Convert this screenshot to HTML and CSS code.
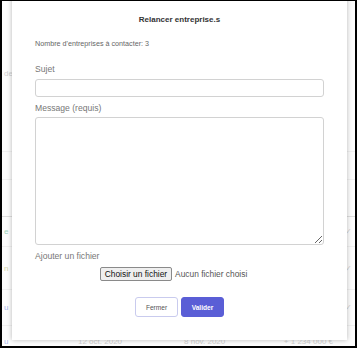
FILE: index.html
```html
<!DOCTYPE html>
<html lang="fr">
<head>
<meta charset="utf-8">
<title>Relancer entreprise.s</title>
<link rel="stylesheet" href="styles.css">
</head>
<body>

<div class="screen">
  <!-- page behind the modal, mostly hidden -->
  <div class="page">
    <div class="row row-head"><span class="cell faint">de</span></div>
    <div class="row row-a"></div>
    <div class="row row-b"></div>
    <div class="row row-c"><span class="cell green">e</span><span class="check">✓</span></div>
    <div class="row row-d"><span class="cell olive">n</span><span class="check">✓</span></div>
    <div class="row row-e"><span class="cell blue">u</span><span class="check">✓</span></div>
    <div class="row row-f">
      <span class="cell blue">u</span>
      <span class="date">12 oct. 2020</span>
      <span class="date">8 nov. 2020</span>
      <span class="amount">+ 1 234 000 €</span>
    </div>
  </div>

  <div class="modal">
    <h1 class="modal-title">Relancer entreprise.s</h1>
    <p class="count">Nombre d'entreprises à contacter: 3</p>

    <label class="field-label" for="sujet">Sujet</label>
    <input type="text" id="sujet" class="field-input">

    <label class="field-label" for="message">Message (requis)</label>
    <textarea id="message" class="field-area"></textarea>

    <div class="field-label">Ajouter un fichier</div>
    <div class="file-row">
      <button type="button" class="file-btn">Choisir un fichier</button>
      <span class="file-name">Aucun fichier choisi</span>
    </div>

    <div class="actions">
      <button type="button" class="btn btn-close">Fermer</button>
      <button type="button" class="btn btn-ok">Valider</button>
    </div>
  </div>
</div>

</body>
</html>
```

FILE: styles.css
```css
body {
  margin: 0;
  font-family: "Liberation Sans", Arial, sans-serif;
  background-color: #000;
}

.screen {
  width: 357px;
  height: 348px;
  box-sizing: border-box;
  border: 2px solid #000;
  border-top-width: 1px;
  position: relative;
  overflow: hidden;
  background-color: #fdfdfd;
}

/* Background page (faded) */
.page {
  display: flex;
  flex-direction: column;
  opacity: 0.45;
}

.row {
  display: flex;
  align-items: center;
  border-bottom: 1px solid #e4e4e4;
  font-size: 8px;
  position: relative;
}

.row-head { height: 151px; align-items: flex-start; padding-top: 68px; box-sizing: border-box; }
.row-a { height: 27px; }
.row-b { height: 36px; border-bottom-color: #bbb; }
.row-c { height: 29px; }
.row-d { height: 42px; }
.row-e { height: 35px; }
.row-f { height: 30px; }

.cell {
  width: 12px;
  padding-left: 2px;
}

.faint { color: #999; }
.green { color: #2a9d6a; }
.olive { color: #a6a83a; }
.blue { color: #3c5ed6; }

.check {
  margin-left: auto;
  margin-right: 3px;
  color: #999;
  font-size: 8px;
}

.date {
  margin-left: 62px;
  color: #999;
}

.amount {
  margin-left: auto;
  margin-right: 22px;
  color: #999;
}

/* Modal */
.modal {
  position: absolute;
  left: 10px;
  top: -20px;
  width: 335px;
  box-sizing: border-box;
  padding: 33px 23px 23px 23px;
  background-color: #fff;
  box-shadow: 0 0 5px rgba(0, 0, 0, 0.28);
  display: flex;
  flex-direction: column;
}

.modal-title {
  margin: 0;
  font-size: 8px;
  line-height: 12px;
  font-weight: bold;
  color: #333;
  text-align: center;
}

.count {
  margin: 13px 0 0 0;
  font-size: 7.2px;
  line-height: 10px;
  color: #666;
}

.field-label {
  display: block;
  margin-top: 5px;
  font-size: 8.6px;
  line-height: 12px;
  color: #777;
}

.count + .field-label {
  margin-top: 14px;
}

.field-input {
  margin: 4px 0 0 0;
  height: 18px;
  box-sizing: border-box;
  border: 1px solid #d2d2d2;
  border-radius: 3px;
  padding: 0 4px;
  font-size: 8px;
}

.field-area {
  margin: 3px 0 0 0;
  height: 128px;
  box-sizing: border-box;
  border: 1px solid #d2d2d2;
  border-radius: 3px;
  padding: 4px;
  font-size: 8px;
  resize: vertical;
}

.file-row {
  margin-top: 5px;
  display: flex;
  justify-content: center;
  align-items: center;
  gap: 3px;
  padding-right: 12px;
}

.file-btn {
  height: 14px;
  padding: 0 4px;
  font-family: "Liberation Sans", Arial, sans-serif;
  font-size: 8.4px;
  color: #111;
  background-color: #efefef;
  border: 1px solid #8a8a8a;
  border-radius: 2px;
}

.file-name {
  font-size: 8.4px;
  color: #555;
}

.actions {
  margin-top: 16px;
  display: flex;
  justify-content: center;
  gap: 3px;
}

.btn {
  height: 20px;
  width: 43px;
  border-radius: 3px;
  font-family: "Liberation Sans", Arial, sans-serif;
  font-size: 6.6px;
  padding: 0;
}

.btn-close {
  background-color: #fff;
  color: #555;
  border: 1px solid #c9cbee;
}

.btn-ok {
  background-color: #5a5ed6;
  color: #fff;
  font-weight: bold;
  border: 1px solid #5a5ed6;
}
```
